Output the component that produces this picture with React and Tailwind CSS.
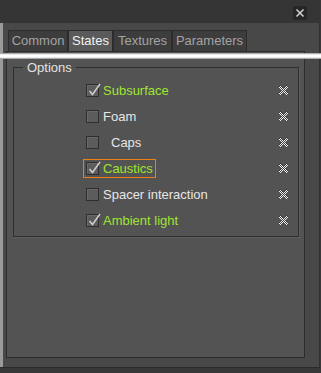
import React from "react";

const rows = [
  { label: "Subsurface", checked: true },
  { label: "Foam", checked: false },
  { label: "Caps", checked: false, indent: true },
  { label: "Caustics", checked: true, focus: true },
  { label: "Spacer interaction", checked: false },
  { label: "Ambient light", checked: true },
];

const tabs = [
  { label: "Common", w: "w-[60px]" },
  { label: "States", w: "w-[45px]", active: true },
  { label: "Textures", w: "w-[59px]" },
  { label: "Parameters", w: "w-[75px]" },
];

function CheckBox({ checked }) {
  return (
    <span className="relative block w-[13px] h-[13px] border border-[#2e2e2e] bg-[#5c5c5c] shadow-[inset_1px_1px_0_#6a6a6a]">
      {checked && (
        <svg
          className="absolute left-[0px] top-[-3px]"
          width="15"
          height="15"
          viewBox="0 0 15 15"
        >
          <path
            d="M2.5 9 L5.5 12.5 L13 2"
            fill="none"
            stroke="#d0d0d0"
            strokeWidth="1.5"
          />
        </svg>
      )}
    </span>
  );
}

function ClearIcon() {
  return (
    <svg width="12" height="12" viewBox="0 0 12 12" shapeRendering="crispEdges">
      <defs>
        <pattern id="chk" width="2" height="2" patternUnits="userSpaceOnUse">
          <rect width="2" height="2" fill="#f2f2f2" />
          <rect width="1" height="1" fill="#3a3a3a" />
          <rect x="1" y="1" width="1" height="1" fill="#3a3a3a" />
        </pattern>
      </defs>
      <path d="M1 3 L3 1 L6 4 L9 1 L11 3 L8 6 L11 9 L9 11 L6 8 L3 11 L1 9 L4 6 Z" fill="url(#chk)" />
    </svg>
  );
}

export default function App() {
  return (
    <div
      className="relative w-[321px] h-[373px] overflow-hidden bg-[#383838]"
      style={{ fontFamily: '"Liberation Sans", Arial, sans-serif' }}
    >
      <div className="flex flex-col w-[320px] h-[368px] bg-[#484848] border-b border-[#2a2a2a]">
        <div className="flex items-start justify-end h-[23px] bg-[#353535] pt-[6px] pr-[13px]">
          <div className="flex items-center justify-center w-[14px] h-[14px] rounded-[2px] bg-[#262626]">
            <svg width="10" height="10" viewBox="0 0 10 10">
              <path d="M1.5 1.5 L8.5 8.5 M8.5 1.5 L1.5 8.5" stroke="#d4d4d4" strokeWidth="1.5" />
            </svg>
          </div>
        </div>
        <div className="flex flex-1 border-l-[3px] border-[#9a9a9a] border-r border-r-[#303030]">
          <div className="flex flex-col flex-1 pl-[3px] pt-[7px] pr-[14px] pb-[9px]">
            <div className="flex pl-[2px] h-[21px]">
              {tabs.map((t) => (
                <div
                  key={t.label}
                  className={`${t.w} flex items-center justify-center border border-b-0 border-[#2c2c2c] text-[13px] ${
                    t.active
                      ? "bg-[#5a5a5a] text-[#f2f2f2]"
                      : "bg-[#3d3d3d] text-[#a3a3a3]"
                  }`}
                >
                  {t.label}
                </div>
              ))}
            </div>
            <div className="flex-1 bg-[#535353] border border-[#2c2c2c] pt-[15px] pl-[6px] pr-[5px]">
              <div className="relative border border-[#2f2f2f] shadow-[1px_1px_0_#5e5e5e] h-[170px] pt-[9px] pl-[72px] pr-[9px]">
                <span className="absolute left-[9px] top-[-8px] px-[4px] bg-[#535353] text-[13px] leading-[15px] text-[#e2e2e2]">
                  Options
                </span>
                {rows.map((r) => (
                  <div key={r.label} className="flex items-center justify-between h-[26px]">
                    <span
                      className={`flex items-center h-[19px] -ml-[3px] pl-[3px] pr-[3px] ${
                        r.focus ? "shadow-[inset_0_0_0_1px_#ee7f12]" : ""
                      }`}
                    >
                      <CheckBox checked={r.checked} />
                      <span
                        className={`text-[13px] leading-none ${r.indent ? "ml-[12px]" : "ml-[4px]"} ${
                          r.checked ? "text-[#9fe52f]" : "text-[#e6e6e6]"
                        }`}
                      >
                        {r.label}
                      </span>
                    </span>
                    <ClearIcon />
                  </div>
                ))}
              </div>
            </div>
          </div>
        </div>
      </div>
      <div className="absolute left-0 top-[53px] w-[321px] h-[6px] bg-[linear-gradient(to_bottom,#8a8a8a,#ffffff_30%,#ffffff_70%,#8a8a8a)]" />
    </div>
  );
}
